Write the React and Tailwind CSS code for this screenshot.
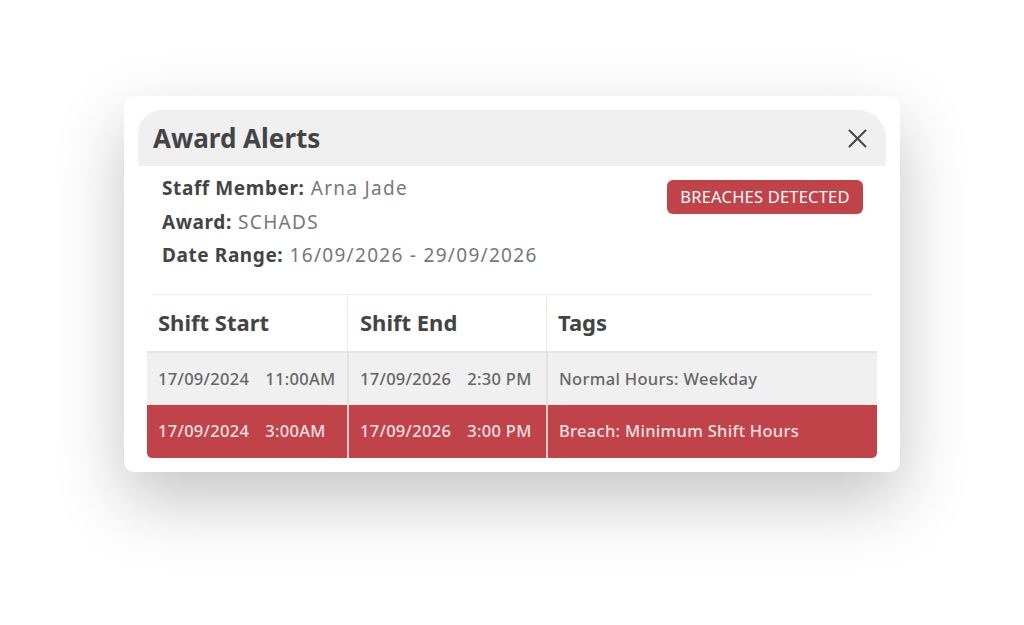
const ROWS = [
  { start: '17/09/2024', startTime: '11:00AM', end: '17/09/2026', endTime: '2:30 PM', tag: 'Normal Hours: Weekday', breach: false },
  { start: '17/09/2024', startTime: '3:00AM', end: '17/09/2026', endTime: '3:00 PM', tag: 'Breach: Minimum Shift Hours', breach: true },
];

const font = { fontFamily: '"Noto Sans", "Open Sans", sans-serif' };

function CloseIcon() {
  return (
    <svg width="19" height="19" viewBox="0 0 19 19" fill="none" stroke="#444" strokeWidth="2" strokeLinecap="round">
      <path d="M1.5 1.5l16 16M17.5 1.5l-16 16" />
    </svg>
  );
}

export default function App() {
  return (
    <div className="min-h-screen bg-white pt-[96px]" style={font}>
      <div className="mx-auto w-[776px] rounded-[10px] bg-white p-[14px] shadow-[0_28px_70px_rgba(0,0,0,0.24)]">
        <header className="flex h-[56px] items-center justify-between rounded-tl-[24px] rounded-tr-[28px] bg-[#f0f0f0] pl-[15px] pr-[19px]">
          <h2 className="text-[26px] font-bold text-[#444]">Award Alerts</h2>
          <CloseIcon />
        </header>

        <div className="flex items-start justify-between pl-[24px] pr-[23px] pt-[6px]">
          <div className="text-[19px] leading-[33.5px] tracking-[1.3px] text-[#777]">
            <p>
              <span className="font-bold tracking-[0.6px] text-[#444]">Staff Member:</span> Arna Jade
            </p>
            <p>
              <span className="font-bold tracking-[0.6px] text-[#444]">Award:</span> SCHADS
            </p>
            <p>
              <span className="font-bold tracking-[0.6px] text-[#444]">Date Range:</span> 16/09/2026 - 29/09/2026
            </p>
          </div>
          <span className="mt-[8px] flex h-[34px] w-[196px] items-center justify-center rounded-[6px] bg-[#c0434a] text-[16.5px] tracking-[0.2px] text-white">
            BREACHES DETECTED
          </span>
        </div>

        <div className="mx-[14px] mt-[21px] border-t border-[#ececec]" />

        <div className="mx-[9px] grid grid-cols-[200px_199px_1fr] text-[#444]">
          <div className="flex h-[56px] items-center pl-[11px] text-[22px] font-bold">Shift Start</div>
          <div className="flex h-[56px] items-center border-l border-[#eaeaea] pl-[12px] text-[22px] font-bold">Shift End</div>
          <div className="flex h-[56px] items-center border-l border-[#eaeaea] pl-[11px] text-[22px] font-bold">Tags</div>

          {ROWS.map((r, i) => {
            const rowCls = r.breach
              ? 'bg-[#c0434a] text-[#f7e1e2] border-[#ecc9cb]'
              : 'bg-[#f0f0f0] text-[#666] border-[#e2e2e2]';
            const h = r.breach ? 'h-[53px] pt-[1px]' : 'h-[54px] border-t-2 border-t-[#e4e4e4] pt-[1px]';
            return [
              <div key={`a${i}`} className={`flex items-center gap-[16px] pl-[11px] text-[16.5px] font-medium tracking-[0.3px] ${h} ${rowCls} ${r.breach ? 'rounded-bl-[5px]' : ''}`}>
                <span>{r.start}</span>
                <span>{r.startTime}</span>
              </div>,
              <div key={`b${i}`} className={`flex items-center gap-[16px] border-l-2 pl-[11px] text-[16.5px] font-medium tracking-[0.3px] ${h} ${rowCls}`}>
                <span>{r.end}</span>
                <span>{r.endTime}</span>
              </div>,
              <div key={`c${i}`} className={`flex items-center border-l-2 pl-[11px] text-[16.5px] font-medium tracking-[0.3px] ${h} ${rowCls} ${r.breach ? 'rounded-br-[5px]' : ''}`}>
                {r.tag}
              </div>,
            ];
          })}
        </div>
      </div>
    </div>
  );
}
